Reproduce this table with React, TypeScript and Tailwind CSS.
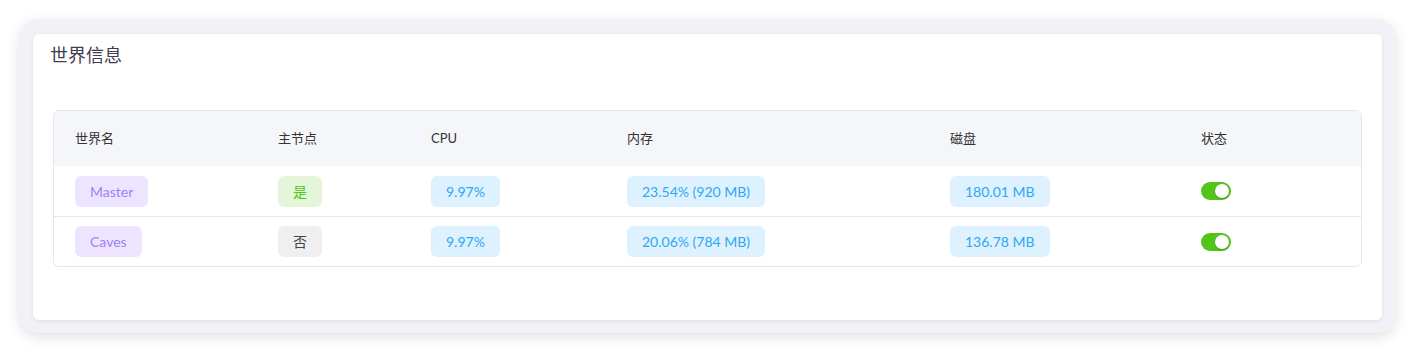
const worlds = [
  { name: 'Master', master: true, cpu: '9.97%', mem: '23.54% (920 MB)', disk: '180.01 MB', on: true },
  { name: 'Caves', master: false, cpu: '9.97%', mem: '20.06% (784 MB)', disk: '136.78 MB', on: true },
];

const cols = 'grid grid-cols-[203px_153px_196px_323px_251px_1fr] items-center pl-[21px]';

function Badge({ children, className }: { children: React.ReactNode; className: string }) {
  return (
    <span className={`inline-flex h-[31px] items-center rounded-[6px] px-[15px] text-[14px] ${className}`}>
      {children}
    </span>
  );
}

function Toggle({ on }: { on: boolean }) {
  return (
    <span
      className={`flex h-[18px] w-[30px] items-center rounded-full p-[2px] ${on ? 'justify-end bg-[#52c41a]' : 'justify-start bg-[#d9d9d9]'}`}
    >
      <span className="h-[14px] w-[14px] rounded-full bg-white shadow-[0_1px_2px_rgba(0,0,0,0.2)]" />
    </span>
  );
}

export default function App() {
  return (
    <div
      className="h-[352px] w-[1415px] bg-white pl-[19px] pt-[19px]"
      style={{ fontFamily: 'Lato, "Noto Sans CJK SC", sans-serif' }}
    >
      <div className="h-[314px] w-[1377px] rounded-[20px] bg-[#f1f2f7] px-[14px] pb-[13px] pt-[15px] shadow-[0_4px_14px_rgba(0,0,0,0.12)]">
        <div className="h-[286px] rounded-[6px] bg-white shadow-[0_1px_4px_rgba(0,0,0,0.08)]">
          <h2 className="px-[17px] pt-[9px] text-[18px] leading-[24px] text-[#3f3d4f]">世界信息</h2>
          <div className="mx-[20px] mt-[43px] overflow-hidden rounded-[6px] border border-[#e6e6ea]">
            <div className={`${cols} h-[55px] bg-[#f5f6fa] text-[13px] text-[#333]`}>
              <span>世界名</span>
              <span>主节点</span>
              <span>CPU</span>
              <span>内存</span>
              <span>磁盘</span>
              <span>状态</span>
            </div>
            {worlds.map((w, i) => (
              <div key={w.name} className={`${cols} h-[50px] ${i > 0 ? 'border-t border-[#e8e8e8]' : ''}`}>
                <div>
                  <Badge className="bg-[#ede5ff] text-[#a27ef7]">{w.name}</Badge>
                </div>
                <div>
                  {w.master ? (
                    <Badge className="bg-[#e3f6da] text-[#52c41a]">是</Badge>
                  ) : (
                    <Badge className="bg-[#efefef] text-[#444]">否</Badge>
                  )}
                </div>
                <div>
                  <Badge className="bg-[#ddf1ff] text-[#2ea8f3]">{w.cpu}</Badge>
                </div>
                <div>
                  <Badge className="bg-[#ddf1ff] text-[#2ea8f3]">{w.mem}</Badge>
                </div>
                <div>
                  <Badge className="bg-[#ddf1ff] text-[#2ea8f3]">{w.disk}</Badge>
                </div>
                <div>
                  <Toggle on={w.on} />
                </div>
              </div>
            ))}
          </div>
        </div>
      </div>
    </div>
  );
}
